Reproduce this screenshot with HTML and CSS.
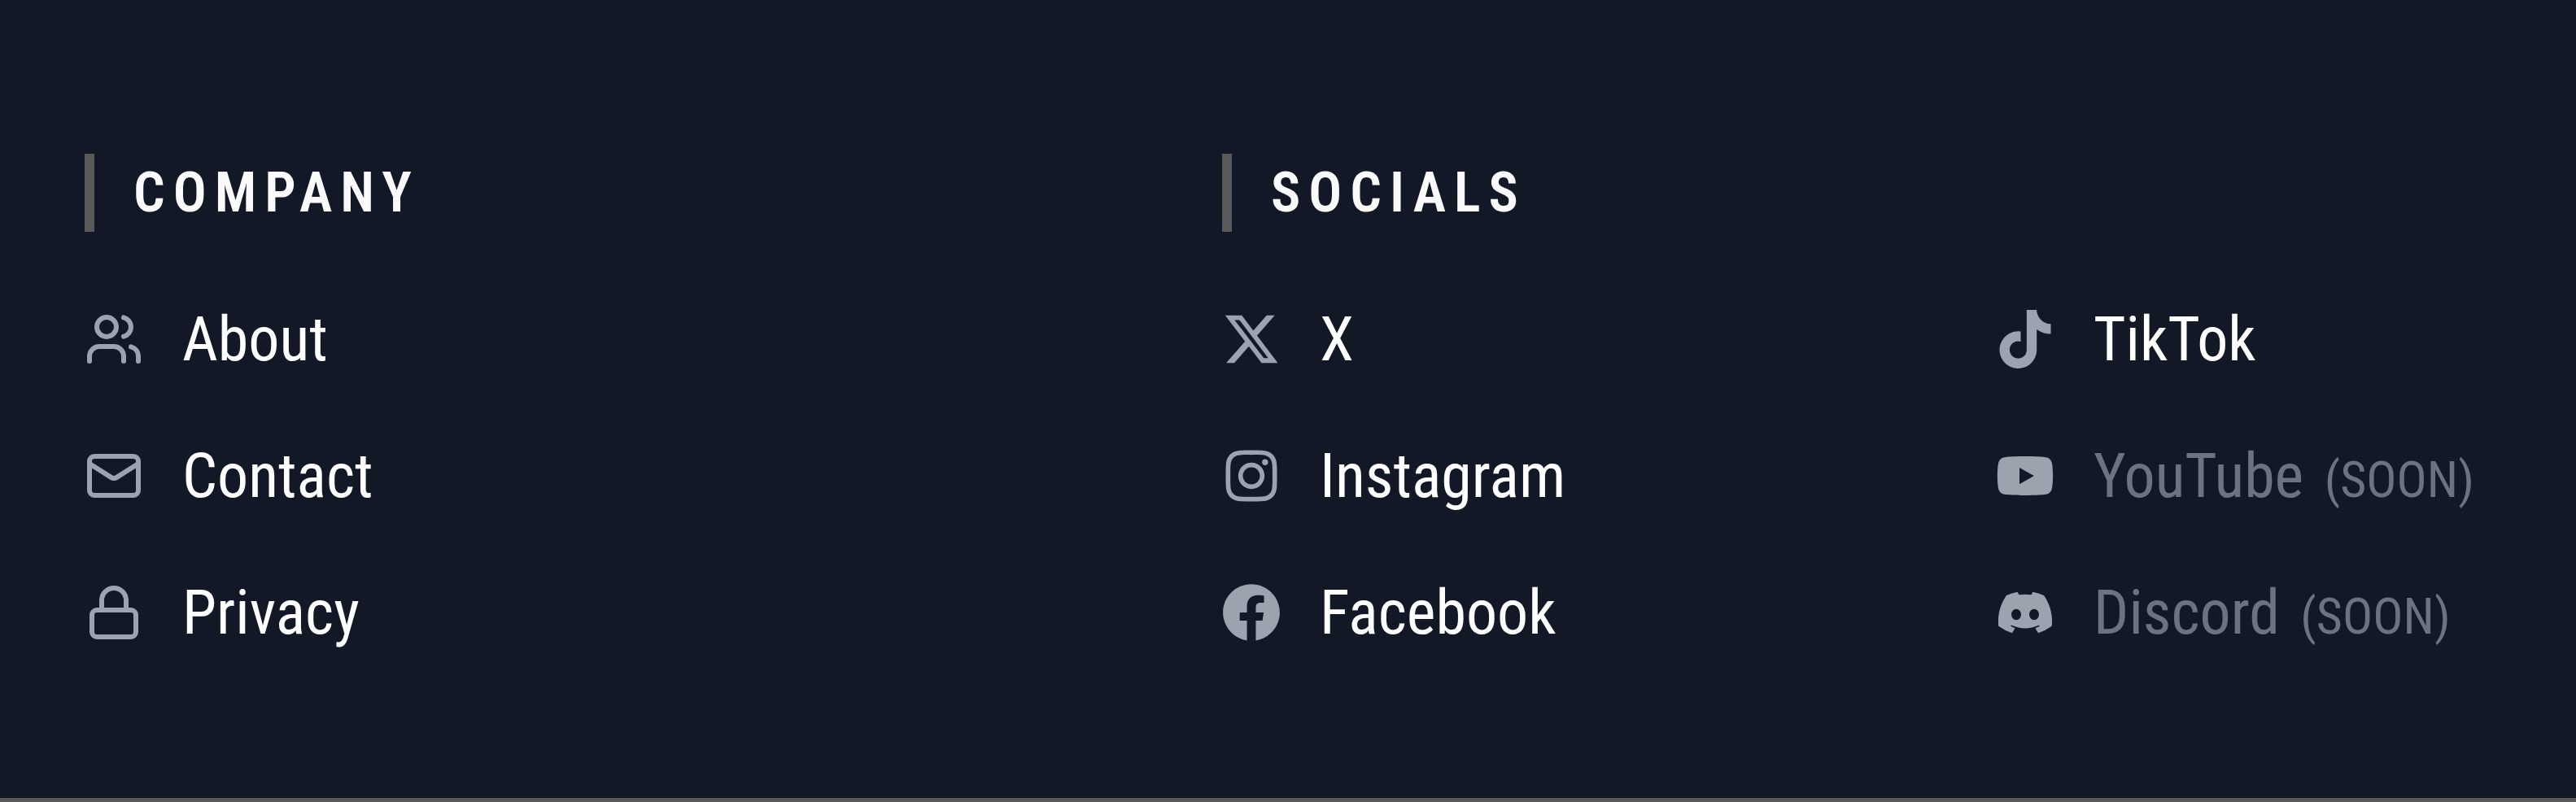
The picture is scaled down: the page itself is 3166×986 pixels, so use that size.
FILE: index.html
```
<!DOCTYPE html>
<html lang="en">
<head>
<meta charset="utf-8">
<meta name="viewport" content="width=device-width, initial-scale=1">
<title>Footer</title>
<link rel="stylesheet" href="styles.css">
</head>
<body>
<footer class="footer">
  <nav class="section" aria-labelledby="company">
    <h2 class="heading" id="company">COMPANY</h2>
    <ul class="links">
      <li><a class="link" href="#about">
        <svg class="icon icon-line" viewBox="0 0 24 24" aria-hidden="true"><path d="M16 21v-2a4 4 0 0 0-4-4H6a4 4 0 0 0-4 4v2"/><circle cx="9" cy="7" r="4"/><path d="M22 21v-2a4 4 0 0 0-3-3.87"/><path d="M16 3.13a4 4 0 0 1 0 7.75"/></svg>
        <span>About</span></a></li>
      <li><a class="link" href="#contact">
        <svg class="icon icon-line" viewBox="0 0 24 24" aria-hidden="true"><rect x="2" y="4" width="20" height="16" rx="2"/><path d="m22 7-8.97 5.7a1.94 1.94 0 0 1-2.06 0L2 7"/></svg>
        <span>Contact</span></a></li>
      <li><a class="link" href="#privacy">
        <svg class="icon icon-line" viewBox="0 0 24 24" aria-hidden="true"><rect x="3" y="11" width="18" height="11" rx="2"/><path d="M7 11V7a5 5 0 0 1 10 0v4"/></svg>
        <span>Privacy</span></a></li>
    </ul>
  </nav>
  <nav class="section" aria-labelledby="socials">
    <h2 class="heading" id="socials">SOCIALS</h2>
    <div class="columns">
      <ul class="links">
        <li><a class="link" href="#x">
          <svg class="icon" viewBox="0 0 512 512" aria-hidden="true"><path d="M389.2 48h70.6L305.6 224.2 487 464H345L233.7 318.6 106.5 464H35.8L200.7 275.5 26.8 48H172.4L272.9 180.9 389.2 48zM364.4 421.8h39.1L151.1 88h-42L364.4 421.8z"/></svg>
          <span>X</span></a></li>
        <li><a class="link" href="#instagram">
          <svg class="icon" viewBox="0 0 448 512" aria-hidden="true"><path d="M224.1 141c-63.6 0-114.9 51.3-114.9 114.9s51.3 114.9 114.9 114.9S339 319.5 339 255.9 287.7 141 224.1 141zm0 189.6c-41.1 0-74.7-33.5-74.7-74.7s33.5-74.7 74.7-74.7 74.7 33.5 74.7 74.7-33.6 74.7-74.7 74.7zm146.4-194.3c0 14.900-12 26.800-26.800 26.800-14.900 0-26.800-12-26.800-26.800s12-26.800 26.800-26.800 26.800 12 26.800 26.800zm76.100 27.200c-1.700-35.900-9.900-67.700-36.200-93.900-26.200-26.200-58-34.400-93.900-36.200-37-2.100-147.900-2.100-184.900 0-35.800 1.700-67.600 9.900-93.900 36.100s-34.400 58-36.200 93.900c-2.100 37-2.100 147.900 0 184.900 1.700 35.900 9.900 67.700 36.200 93.900s58 34.400 93.900 36.200c37 2.100 147.900 2.100 184.900 0 35.900-1.700 67.700-9.900 93.900-36.200 26.200-26.200 34.400-58 36.200-93.900 2.100-37 2.100-147.800 0-184.800zM398.800 388c-7.800 19.600-22.900 34.700-42.600 42.600-29.500 11.700-99.500 9-132.100 9s-102.700 2.600-132.100-9c-19.600-7.800-34.700-22.900-42.600-42.600-11.700-29.500-9-99.500-9-132.100s-2.600-102.700 9-132.100c7.800-19.600 22.900-34.700 42.600-42.600 29.500-11.700 99.500-9 132.100-9s102.700-2.600 132.100 9c19.600 7.800 34.700 22.900 42.600 42.600 11.700 29.500 9 99.500 9 132.100s2.700 102.700-9 132.100z"/></svg>
          <span>Instagram</span></a></li>
        <li><a class="link" href="#facebook">
          <svg class="icon" viewBox="0 0 512 512" aria-hidden="true"><path d="M504 256C504 119 393 8 256 8S8 119 8 256c0 123.780 90.690 226.380 209.250 245V327.690h-63V256h63v-54.640c0-62.150 37-96.480 93.670-96.480 27.140 0 55.520 4.840 55.520 4.840v61h-31.280c-30.800 0-40.410 19.120-40.410 38.730V256h68.780l-11 71.690h-57.780V501C413.310 482.380 504 379.780 504 256z"/></svg>
          <span>Facebook</span></a></li>
      </ul>
      <ul class="links">
        <li><a class="link" href="#tiktok">
          <svg class="icon" viewBox="0 0 448 512" aria-hidden="true"><path d="M448,209.91a210.060,210.060,0,0,1-122.770-39.250V349.380A162.550,162.550,0,1,1,185,188.310V278.200a74.620,74.620,0,1,0,52.230,71.180V0l88,0a121.180,121.180,0,0,0,1.860,22.170h0A122.180,122.180,0,0,0,381,102.390a121.430,121.430,0,0,0,67,20.140Z"/></svg>
          <span>TikTok</span></a></li>
        <li><span class="link link-soon">
          <svg class="icon" viewBox="0 0 576 512" aria-hidden="true"><path d="M549.655 124.083c-6.281-23.650-24.787-42.276-48.284-48.597C458.781 64 288 64 288 64S117.220 64 74.629 75.486c-23.497 6.322-42.003 24.947-48.284 48.597-11.412 42.867-11.412 132.305-11.412 132.305s0 89.438 11.412 132.305c6.281 23.650 24.787 41.500 48.284 47.821C117.220 448 288 448 288 448s170.780 0 213.371-11.486c23.497-6.321 42.003-24.171 48.284-47.821 11.412-42.867 11.412-132.305 11.412-132.305s0-89.438-11.412-132.305zm-317.510 213.508V175.185l142.739 81.205-142.739 81.201z"/></svg>
          <span>YouTube <span class="soon">(SOON)</span></span></span></li>
        <li><span class="link link-soon">
          <svg class="icon" viewBox="0 0 640 512" aria-hidden="true"><path d="M524.531,69.836a1.500,1.500,0,0,0-.764-.7A485.065,485.065,0,0,0,404.081,32.030a1.816,1.816,0,0,0-1.923.910,337.461,337.461,0,0,0-14.900,30.600,447.848,447.848,0,0,0-134.426,0,309.541,309.541,0,0,0-15.135-30.600,1.890,1.890,0,0,0-1.924-.910A483.689,483.689,0,0,0,116.085,69.137a1.712,1.712,0,0,0-.788.676C39.068,183.651,18.186,294.690,28.430,404.354a2.016,2.016,0,0,0,.765,1.375A487.666,487.666,0,0,0,176.020,479.918a1.900,1.900,0,0,0,2.063-.676A348.200,348.200,0,0,0,208.120,430.400a1.860,1.860,0,0,0-1.019-2.588,321.173,321.173,0,0,1-45.868-21.853,1.885,1.885,0,0,1-.185-3.126c3.082-2.309,6.166-4.711,9.109-7.137a1.819,1.819,0,0,1,1.900-.256c96.229,43.917,200.410,43.917,295.500,0a1.812,1.812,0,0,1,1.924.233c2.944,2.426,6.027,4.851,9.132,7.160a1.884,1.884,0,0,1-.162,3.126,301.407,301.407,0,0,1-45.890,21.830,1.875,1.875,0,0,0-1,2.611,391.055,391.055,0,0,0,30.014,48.815,1.864,1.864,0,0,0,2.063.700A486.048,486.048,0,0,0,610.700,405.729a1.882,1.882,0,0,0,.765-1.352C623.729,277.594,590.933,167.465,524.531,69.836ZM222.491,337.580c-28.972,0-52.844-26.587-52.844-59.239S193.056,219.100,222.491,219.100c29.665,0,53.306,26.820,52.843,59.239C275.334,310.993,251.924,337.580,222.491,337.580Zm195.380,0c-28.971,0-52.843-26.587-52.843-59.239S388.437,219.100,417.871,219.100c29.667,0,53.307,26.820,52.844,59.239C470.715,310.993,447.538,337.580,417.871,337.580Z"/></svg>
          <span>Discord <span class="soon">(SOON)</span></span></span></li>
      </ul>
    </div>
  </nav>
</footer>
</body>
</html>
```
FILE: styles.css
```
body {
  margin: 0;
  background: #121825;
  color: #fff;
  font-family: "Saira Semi Condensed", "Roboto Condensed", Roboto, sans-serif;
}

.footer {
  display: grid;
  grid-template-columns: 1398fr 1664fr;
  padding: 189px 0 168px 104px;
  border-bottom: 5px solid #5a5a5a;
}

.heading {
  margin: 0 0 72px;
  padding-left: 48px;
  border-left: 12px solid #5a5a5a;
  color: #fafafa;
  font-size: 68px;
  font-weight: 600;
  line-height: 96px;
  letter-spacing: 10px;
}

.columns {
  display: grid;
  grid-template-columns: 951fr 713fr;
}

.links {
  display: grid;
  align-content: start;
  gap: 48px;
  margin: 0;
  padding: 0;
  list-style: none;
}

.link {
  display: flex;
  align-items: center;
  gap: 48px;
  color: #fff;
  font-size: 76px;
  font-weight: 400;
  line-height: 120px;
  white-space: nowrap;
  text-decoration: none;
}

.link-soon {
  color: #6b7280;
}

.soon {
  margin-left: 8px;
  font-size: 62px;
  line-height: 1;
}

.icon {
  flex: none;
  width: 72px;
  height: 72px;
  color: #9ca3af;
  fill: currentColor;
}

.icon-line {
  fill: none;
  stroke: currentColor;
  stroke-width: 2;
  stroke-linecap: round;
  stroke-linejoin: round;
}
```
